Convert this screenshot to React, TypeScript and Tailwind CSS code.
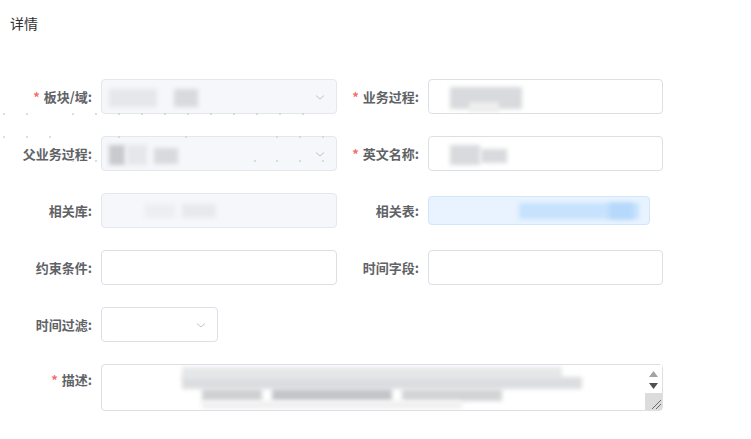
import React from 'react';

const font = { fontFamily: '"Noto Sans CJK SC", "Noto Sans", sans-serif' };

type Blob = { l: number; t: number; w: number; h: number; c: string };

const Smudge = ({ blobs }: { blobs: Blob[] }) => (
  <div className="pointer-events-none absolute inset-0 overflow-hidden">
    {blobs.map((b, i) => (
      <div
        key={i}
        className="absolute blur-[2px]"
        style={{ left: b.l, top: b.t, width: b.w, height: b.h, background: b.c }}
      />
    ))}
  </div>
);

const Chevron = () => (
  <svg width="12" height="12" viewBox="0 0 12 12" className="absolute right-[10px] top-1/2 -translate-y-1/2">
    <path d="M2 4.5 L6 8 L10 4.5" fill="none" stroke="#c0c4cc" strokeWidth="1" />
  </svg>
);

const Label = ({ text, required, width }: { text: string; required?: boolean; width: string }) => (
  <div className={`${width} shrink-0 pr-[9px] text-right text-[13px] font-semibold text-[#606266]`}>
    {required && <span className="mr-1 text-[#f56c6c]">*</span>}
    {text}:
  </div>
);

const Box = ({
  width,
  variant = 'white',
  select,
  blobs = [],
}: {
  width: string;
  variant?: 'white' | 'disabled' | 'blue';
  select?: boolean;
  blobs?: Blob[];
}) => {
  const look =
    variant === 'disabled'
      ? 'bg-[#f5f7fa] border-[#e4e7ed]'
      : variant === 'blue'
      ? 'bg-[#ecf5ff] border-[#d9ecff]'
      : 'bg-white border-[#dcdfe6]';
  return (
    <div className={`relative h-[35px] ${width} rounded border ${look}`}>
      <Smudge blobs={blobs} />
      {select && <Chevron />}
    </div>
  );
};

const g1 = '#e6e7ea';
const g2 = '#d9dadd';
const g3 = '#c9cacd';

export default function App() {
  const dots: [number, number][] = [];
  [3, 26, 72, 95, 118, 141, 164, 187, 210, 233, 256, 279, 302].forEach((x) => dots.push([x, 113]));
  [3, 26, 49, 118, 185, 276, 299, 322].forEach((x) => dots.push([x, 136]));
  [72, 95, 254, 276, 299, 322].forEach((x) => dots.push([x, 160]));

  return (
    <div className="relative min-h-[439px] w-[751px] bg-white" style={font}>
      <div className="px-[10px] pt-[13px] text-[14px] text-[#303133]">详情</div>

      <div className="mt-[45px] flex flex-col gap-[22px]">
        <div className="flex items-center">
          <Label text="板块/域" required width="w-[101px]" />
          <Box
            width="w-[236px]"
            variant="disabled"
            select
            blobs={[
              { l: 7, t: 9, w: 48, h: 18, c: g1 },
              { l: 72, t: 9, w: 24, h: 18, c: g2 },
            ]}
          />
          <Label text="业务过程" required width="w-[91px]" />
          <Box
            width="w-[235px]"
            blobs={[
              { l: 21, t: 7, w: 72, h: 22, c: g2 },
              { l: 40, t: 22, w: 30, h: 10, c: '#eeeeee' },
            ]}
          />
        </div>

        <div className="flex items-center">
          <Label text="父业务过程" width="w-[101px]" />
          <Box
            width="w-[236px]"
            variant="disabled"
            select
            blobs={[
              { l: 7, t: 8, w: 16, h: 20, c: g3 },
              { l: 25, t: 8, w: 20, h: 20, c: g1 },
              { l: 52, t: 11, w: 24, h: 16, c: g2 },
            ]}
          />
          <Label text="英文名称" required width="w-[91px]" />
          <Box
            width="w-[235px]"
            blobs={[
              { l: 21, t: 8, w: 30, h: 20, c: g2 },
              { l: 52, t: 12, w: 26, h: 14, c: g2 },
            ]}
          />
        </div>

        <div className="flex items-center">
          <Label text="相关库" width="w-[101px]" />
          <Box
            width="w-[236px]"
            variant="disabled"
            blobs={[
              { l: 43, t: 10, w: 30, h: 14, c: '#eceef1' },
              { l: 80, t: 10, w: 34, h: 14, c: '#e8e9ec' },
            ]}
          />
          <Label text="相关表" width="w-[91px]" />
          <div className="relative h-[29px] w-[222px] rounded border border-[#d0e6fb] bg-[#e8f3ff]">
            <Smudge
              blobs={[
                { l: 90, t: 6, w: 120, h: 16, c: '#c6e2fd' },
                { l: 180, t: 6, w: 24, h: 16, c: '#b6d8fb' },
              ]}
            />
          </div>
        </div>

        <div className="flex items-center">
          <Label text="约束条件" width="w-[101px]" />
          <Box width="w-[236px]" />
          <Label text="时间字段" width="w-[91px]" />
          <Box width="w-[235px]" />
        </div>

        <div className="flex items-center">
          <Label text="时间过滤" width="w-[101px]" />
          <Box width="w-[117px]" select />
        </div>

        <div className="flex items-start">
          <div className="pt-[6px]">
            <Label text="描述" required width="w-[101px]" />
          </div>
          <div className="relative h-[47px] w-[562px] rounded border border-[#dcdfe6] bg-white">
            <Smudge
              blobs={[
                { l: 80, t: 2, w: 380, h: 12, c: '#e6e7e9' },
                { l: 80, t: 12, w: 400, h: 12, c: '#dcdde0' },
                { l: 100, t: 24, w: 60, h: 12, c: '#cfd0d3' },
                { l: 170, t: 24, w: 120, h: 12, c: '#c4c5c9' },
                { l: 300, t: 24, w: 100, h: 12, c: '#d3d4d6' },
                { l: 100, t: 36, w: 260, h: 8, c: '#f0f0f1' },
              ]}
            />
            <div className="absolute right-0 top-0 flex h-full w-[17px] flex-col items-center bg-white">
              <svg width="9" height="6" viewBox="0 0 9 6" className="mt-[6px]">
                <path d="M0 6 L4.5 0 L9 6 Z" fill="#a3a3a3" />
              </svg>
              <svg width="9" height="6" viewBox="0 0 9 6" className="mt-[6px]">
                <path d="M0 0 L4.5 6 L9 0 Z" fill="#505050" />
              </svg>
              <div className="mt-auto flex h-[17px] w-full items-end justify-end bg-[#dcdcdc]">
                <svg width="12" height="12" viewBox="0 0 12 12">
                  <path d="M11 2 L2 11 M11 6 L6 11" stroke="#6b6b6b" strokeWidth="1" />
                </svg>
              </div>
            </div>
          </div>
        </div>
      </div>

      {dots.map(([x, y], i) => (
        <div
          key={i}
          className="absolute h-[2px] w-[2px] rounded-full bg-[#b7e3bf]"
          style={{ left: x, top: y }}
        />
      ))}
    </div>
  );
}
